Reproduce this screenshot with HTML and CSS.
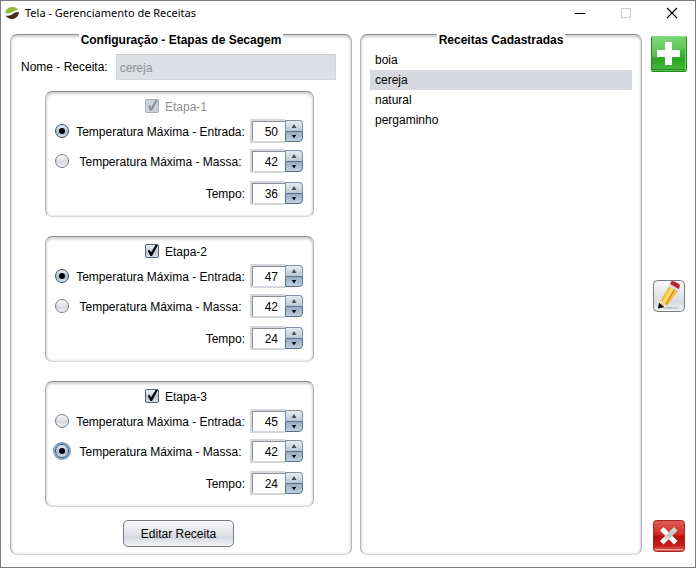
FILE: index.html
```html
<!DOCTYPE html>
<html lang="pt-BR">
<head>
<meta charset="utf-8">
<title>Tela - Gerenciamento de Receitas</title>
<link rel="stylesheet" href="styles.css">
</head>
<body>
<div class="window">
  <header class="titlebar">
    <svg class="logo" viewBox="0 0 14 12" aria-hidden="true">
      <path fill="#8dbb3a" d="M0 5.800C1 2 4 0 7.500 0c2.600 0 4.800 1.200 5.800 3C10.500 3 9 4 7.500 5 5 6.600 2 6.800 0 5.800z"/>
      <path fill="#4a2c1c" d="M14 5.200C13.500 9.500 10.500 12 7 12 4 12 1.800 10.800.6 8.600c3 .6 5-.1 7-1.500C9.600 5.600 11.600 4.500 14 5.200z"/>
    </svg>
    <h1 class="title">Tela - Gerenciamento de Receitas</h1>
    <div class="controls">
      <button class="control" aria-label="Minimizar"><svg viewBox="0 0 12 12"><path d="M1 6.500h10" stroke="#000"/></svg></button>
      <button class="control" aria-label="Maximizar" disabled><svg viewBox="0 0 12 12"><path d="M1.500 1.500h9v9h-9z" fill="none" stroke="#ccc"/></svg></button>
      <button class="control" aria-label="Fechar"><svg viewBox="0 0 12 12"><path d="M1 1l10 10M11 1L1 11" stroke="#000" stroke-width="1.200"/></svg></button>
    </div>
  </header>

  <main class="content">
    <section class="panel">
      <h2 class="legend">Configuração - Etapas de Secagem</h2>
      <div class="name-row">
        <label for="nome">Nome - Receita:</label>
        <input class="name" id="nome" type="text" value="cereja" disabled>
      </div>

      <div class="stages">
        <div class="stage">
          <div class="stage-head">
            <input class="check" type="checkbox" id="e1" checked disabled><label for="e1">Etapa-1</label>
          </div>
          <div class="row">
            <input class="radio" type="radio" name="t1" id="e1a" checked>
            <label for="e1a">Temperatura Máxima - Entrada:</label>
            <div class="spinner"><input type="number" value="50" aria-label="Entrada 1"><button class="up" aria-label="Aumentar"></button><button class="down" aria-label="Diminuir"></button></div>
          </div>
          <div class="row">
            <input class="radio" type="radio" name="t1" id="e1b">
            <label for="e1b">Temperatura Máxima - Massa:</label>
            <div class="spinner"><input type="number" value="42" aria-label="Massa 1"><button class="up" aria-label="Aumentar"></button><button class="down" aria-label="Diminuir"></button></div>
          </div>
          <div class="row time">
            <label for="e1c">Tempo:</label>
            <div class="spinner"><input type="number" value="36" id="e1c"><button class="up" aria-label="Aumentar"></button><button class="down" aria-label="Diminuir"></button></div>
          </div>
        </div>

        <div class="stage">
          <div class="stage-head">
            <input class="check" type="checkbox" id="e2" checked><label for="e2">Etapa-2</label>
          </div>
          <div class="row">
            <input class="radio" type="radio" name="t2" id="e2a" checked>
            <label for="e2a">Temperatura Máxima - Entrada:</label>
            <div class="spinner"><input type="number" value="47" aria-label="Entrada 2"><button class="up" aria-label="Aumentar"></button><button class="down" aria-label="Diminuir"></button></div>
          </div>
          <div class="row">
            <input class="radio" type="radio" name="t2" id="e2b">
            <label for="e2b">Temperatura Máxima - Massa:</label>
            <div class="spinner"><input type="number" value="42" aria-label="Massa 2"><button class="up" aria-label="Aumentar"></button><button class="down" aria-label="Diminuir"></button></div>
          </div>
          <div class="row time">
            <label for="e2c">Tempo:</label>
            <div class="spinner"><input type="number" value="24" id="e2c"><button class="up" aria-label="Aumentar"></button><button class="down" aria-label="Diminuir"></button></div>
          </div>
        </div>

        <div class="stage">
          <div class="stage-head">
            <input class="check" type="checkbox" id="e3" checked><label for="e3">Etapa-3</label>
          </div>
          <div class="row">
            <input class="radio" type="radio" name="t3" id="e3a">
            <label for="e3a">Temperatura Máxima - Entrada:</label>
            <div class="spinner"><input type="number" value="45" aria-label="Entrada 3"><button class="up" aria-label="Aumentar"></button><button class="down" aria-label="Diminuir"></button></div>
          </div>
          <div class="row">
            <input class="radio focused" type="radio" name="t3" id="e3b" checked>
            <label for="e3b">Temperatura Máxima - Massa:</label>
            <div class="spinner"><input type="number" value="42" aria-label="Massa 3"><button class="up" aria-label="Aumentar"></button><button class="down" aria-label="Diminuir"></button></div>
          </div>
          <div class="row time">
            <label for="e3c">Tempo:</label>
            <div class="spinner"><input type="number" value="24" id="e3c"><button class="up" aria-label="Aumentar"></button><button class="down" aria-label="Diminuir"></button></div>
          </div>
        </div>
      </div>

      <button class="edit">Editar Receita</button>
    </section>

    <section class="panel">
      <h2 class="legend">Receitas Cadastradas</h2>
      <ul class="recipes">
        <li>boia</li>
        <li class="selected">cereja</li>
        <li>natural</li>
        <li>pergaminho</li>
      </ul>
    </section>

    <nav class="tools">
      <button class="tool" aria-label="Adicionar">
        <svg width="36" height="36" viewBox="0 0 36 36">
          <defs>
            <linearGradient id="green" x1="0" y1="0" x2="0" y2="1"><stop offset="0" stop-color="#62cf5c"/><stop offset=".5" stop-color="#43b93a"/><stop offset=".7" stop-color="#2ba323"/><stop offset="1" stop-color="#48b83f"/></linearGradient>
            <linearGradient id="shine" x1="0" y1="0" x2="1" y2="1"><stop offset="0" stop-color="#fff" stop-opacity=".2"/><stop offset="1" stop-color="#fff" stop-opacity=".08"/></linearGradient>
          </defs>
          <rect width="36" height="36" rx="2" fill="#23891d"/>
          <rect x="1" y="1" width="34" height="32" rx="1" fill="url(#green)"/>
          <path d="M1 1h33v11Q20 21 1 22z" fill="url(#shine)"/>
          <path d="M1 34.500h34" stroke="#5ac953"/>
          <path d="M34.500 2v32" stroke="#75d66d"/>
          <path d="M1 .5h34" stroke="#8ddc86"/>
          <path d="M14 6h7v8h8v7h-8v8h-7v-8H6v-7h8z" fill="#fff"/>
        </svg>
      </button>
      <button class="tool" aria-label="Editar">
        <svg width="32" height="32" viewBox="0 0 32 32">
          <defs><linearGradient id="silver" x1="0" y1="0" x2="0" y2="1"><stop offset="0" stop-color="#fbfbfc"/><stop offset=".55" stop-color="#dfe1e6"/><stop offset=".7" stop-color="#d8dae0"/><stop offset="1" stop-color="#f3f4f6"/></linearGradient></defs>
          <rect x=".5" y=".5" width="31" height="31" rx="4" fill="url(#silver)" stroke="#777b84"/>
          <path d="M9 28q7-1.500 18 0q-9 1-18 0z" fill="#a5a7ab"/>
          <path d="M7 21L17 5l9 4.500L14 26z" fill="#f3bd3b"/>
          <path d="M9.500 21.500L19 6l3 1.500L12 24z" fill="#ffdc70"/>
          <path d="M22 8.500L12.500 25" stroke="#cb8b1d" stroke-width="1.200"/>
          <path d="M16 6.500l1.500-2.500 9 4.500-1.500 3z" fill="#dcdcdc"/>
          <path d="M17 4l1.500-3q4 0 8.500 4l-1 4z" fill="#b32430"/>
          <path d="M7 20l-1.500 8L14 25.500l-1.500-2-2-.5-1-2z" fill="#f0d9ad"/>
          <path d="M6.400 23.500L5.500 28l5-1.200z" fill="#111" stroke="#111"/>
        </svg>
      </button>
      <button class="tool" aria-label="Excluir">
        <svg width="32" height="32" viewBox="0 0 32 32">
          <defs>
            <linearGradient id="red" x1="0" y1="0" x2="0" y2="1"><stop offset="0" stop-color="#df5d56"/><stop offset=".45" stop-color="#cf2c28"/><stop offset=".5" stop-color="#b80d0d"/><stop offset=".8" stop-color="#c51c1a"/><stop offset="1" stop-color="#ea6a60"/></linearGradient>
            <linearGradient id="steel" x1="0" y1="1" x2="1" y2="0"><stop offset="0" stop-color="#fff"/><stop offset=".5" stop-color="#c4c4c4"/><stop offset="1" stop-color="#d2d2d2"/></linearGradient>
          </defs>
          <rect x=".5" y=".5" width="31" height="31" rx="3" fill="url(#red)" stroke="#a32420"/>
          <path d="M2 29.500h28" stroke="#f0a09a"/>
          <path d="M10.500 10.500l10.500 10.500" stroke="#fff" stroke-width="5" stroke-linecap="square"/>
          <path d="M10.500 21L21 10.500" stroke="url(#steel)" stroke-width="5" stroke-linecap="square"/>
        </svg>
      </button>
    </nav>
  </main>
</div>
</body>
</html>
```
FILE: styles.css
```css
* { box-sizing: border-box; }

body {
  margin: 0;
  background: #fff;
  color: #000;
  font: 12px/14px "Liberation Sans", Arial, sans-serif;
}

h1, h2, ul { margin: 0; padding: 0; }
button, input { margin: 0; font: inherit; color: inherit; }
button { padding: 0; border: 0; background: none; }

.window {
  display: flex;
  flex-direction: column;
  min-height: 100vh;
  border: 1px solid #7b7b7b;
}

.titlebar {
  display: flex;
  align-items: center;
  height: 24px;
  padding-left: 4px;
  gap: 6px;
}
.logo { width: 14px; height: 12px; }
.title { flex: 1; font: 11px/16px "Noto Sans", "Open Sans", sans-serif; }
.controls { display: flex; }
.control { display: grid; place-items: center; width: 46px; height: 24px; }
.control svg { width: 12px; height: 12px; }

.content {
  flex: 1;
  display: grid;
  grid-template-columns: 342fr 282fr 37px;
  gap: 8px;
  padding: 9px 8px 12px 9px;
}

.panel, .stage {
  border: 1px solid #b4b4b4;
  border-top-color: #8e8e8e;
  border-bottom-color: #d8d8d8;
  border-radius: 7px;
  box-shadow: inset 0 2px 3px #d0d0d0, inset 0 0 3px #d0d0d0;
}
.panel { display: flex; flex-direction: column; }

.legend {
  align-self: center;
  margin-top: -2px;
  padding: 0 2px;
  background: #fff;
  font-size: 12px;
  line-height: 14px;
}

.name-row {
  display: flex;
  align-items: center;
  gap: 8px;
  margin: 7px 15px 0 10px;
}
.name {
  flex: 1;
  min-width: 0;
  height: 26px;
  padding: 2px 3px 0;
  border: 1px solid #d3d6db;
  border-top-color: #c6c9ce;
  background: #dce0e5;
  color: #8e8f91;
}

.stages {
  display: grid;
  gap: 19px;
  margin: 11px 37px 0 34px;
}
.stage { padding: 7px 10px 8px 9px; }

.stage-head {
  display: flex;
  align-items: center;
  justify-content: center;
  gap: 6px;
  height: 14px;
  margin-bottom: 3px;
  padding-right: 6px;
}
.stage-head label { padding-top: 1px; }
.check:disabled + label { color: #8e8f91; }

.check {
  appearance: none;
  display: grid;
  width: 14px;
  height: 14px;
  border: 1px solid #56606c;
  border-radius: 2px;
  background: linear-gradient(#eff3f7, #b9c8d7 60%, #d3e1ed);
}
.check:checked::before {
  content: "";
  background: #000;
  clip-path: polygon(15% 48%, 30% 40%, 42% 62%, 80% 0, 100% 0, 50% 92%, 36% 92%);
}
.check:disabled { border-color: #a9b0ba; background: #ccd3dc; }
.check:disabled::before { background: #8e949c; }

.row {
  display: grid;
  grid-template-columns: 14px 1fr 53px;
  align-items: center;
  height: 30px;
  text-align: center;
  white-space: nowrap;
}
.row label { padding: 1px 0 0 2px; }
.time { grid-template-columns: 1fr 53px; margin-top: 2px; }
.time label { padding-right: 5px; text-align: right; }

.radio {
  appearance: none;
  display: grid;
  place-items: center;
  width: 14px;
  height: 14px;
  border: 1px solid #777b83;
  border-radius: 50%;
  background: linear-gradient(#fafafa, #d8dae0 60%, #f1f2f4);
}
.radio:checked {
  border-color: #3f4c5b;
  background: linear-gradient(#e9eff5, #a8bccf 60%, #d2e2ef);
}
.radio:checked::before {
  content: "";
  width: 6px;
  height: 6px;
  border-radius: 50%;
  background: #000;
}
.focused { box-shadow: 0 0 0 2px #73a4d1; }

.spinner {
  display: grid;
  grid-template: 1fr 1fr / 1fr 18px;
  height: 24px;
}
.spinner input {
  appearance: textfield;
  grid-row: 1 / 3;
  width: 100%;
  min-width: 0;
  padding: 2px 7px 0 0;
  border: 2px solid #d4d8de;
  border-right: 0;
  outline: 0;
  background: #fff;
  box-shadow: inset 1px 1px #8d9095;
  text-align: right;
}
.spinner input::-webkit-inner-spin-button { appearance: none; margin: 0; }
.spinner button {
  display: grid;
  place-items: center;
  border: 1px solid #5d7184;
}
.spinner button::before {
  content: "";
  width: 5px;
  height: 4px;
  background: #4b4f54;
  clip-path: polygon(50% 0, 100% 100%, 0 100%);
}
.spinner .up {
  margin-top: 1px;
  border-color: #8292a2;
  border-bottom: 0;
  border-radius: 0 4px 0 0;
  background: linear-gradient(#e4ebf2, #b9c9d8);
}
.spinner .down {
  margin-bottom: 1px;
  border-radius: 0 0 4px 0;
  background: linear-gradient(#98adc2, #bed0e1);
}
.spinner .down::before { background: #000; clip-path: polygon(0 0, 100% 0, 50% 100%); }

.edit {
  align-self: center;
  width: 111px;
  height: 27px;
  margin: 13px 5px 7px 0;
  padding-top: 1px;
  border: 1px solid #777b84;
  border-radius: 5px;
  background: linear-gradient(#fafafb, #e0e2e7 50%, #d6d9df 65%, #f1f2f4);
}

.recipes {
  margin: 3px 9px 0;
  list-style: none;
}
.recipes li { padding: 0 5px; line-height: 20px; }
.recipes .selected { background: #d6d9e0; }

.tools {
  display: flex;
  flex-direction: column;
  justify-content: space-between;
  align-items: center;
  padding: 2px 0 3px 1px;
}
.tool svg { display: block; }
```
